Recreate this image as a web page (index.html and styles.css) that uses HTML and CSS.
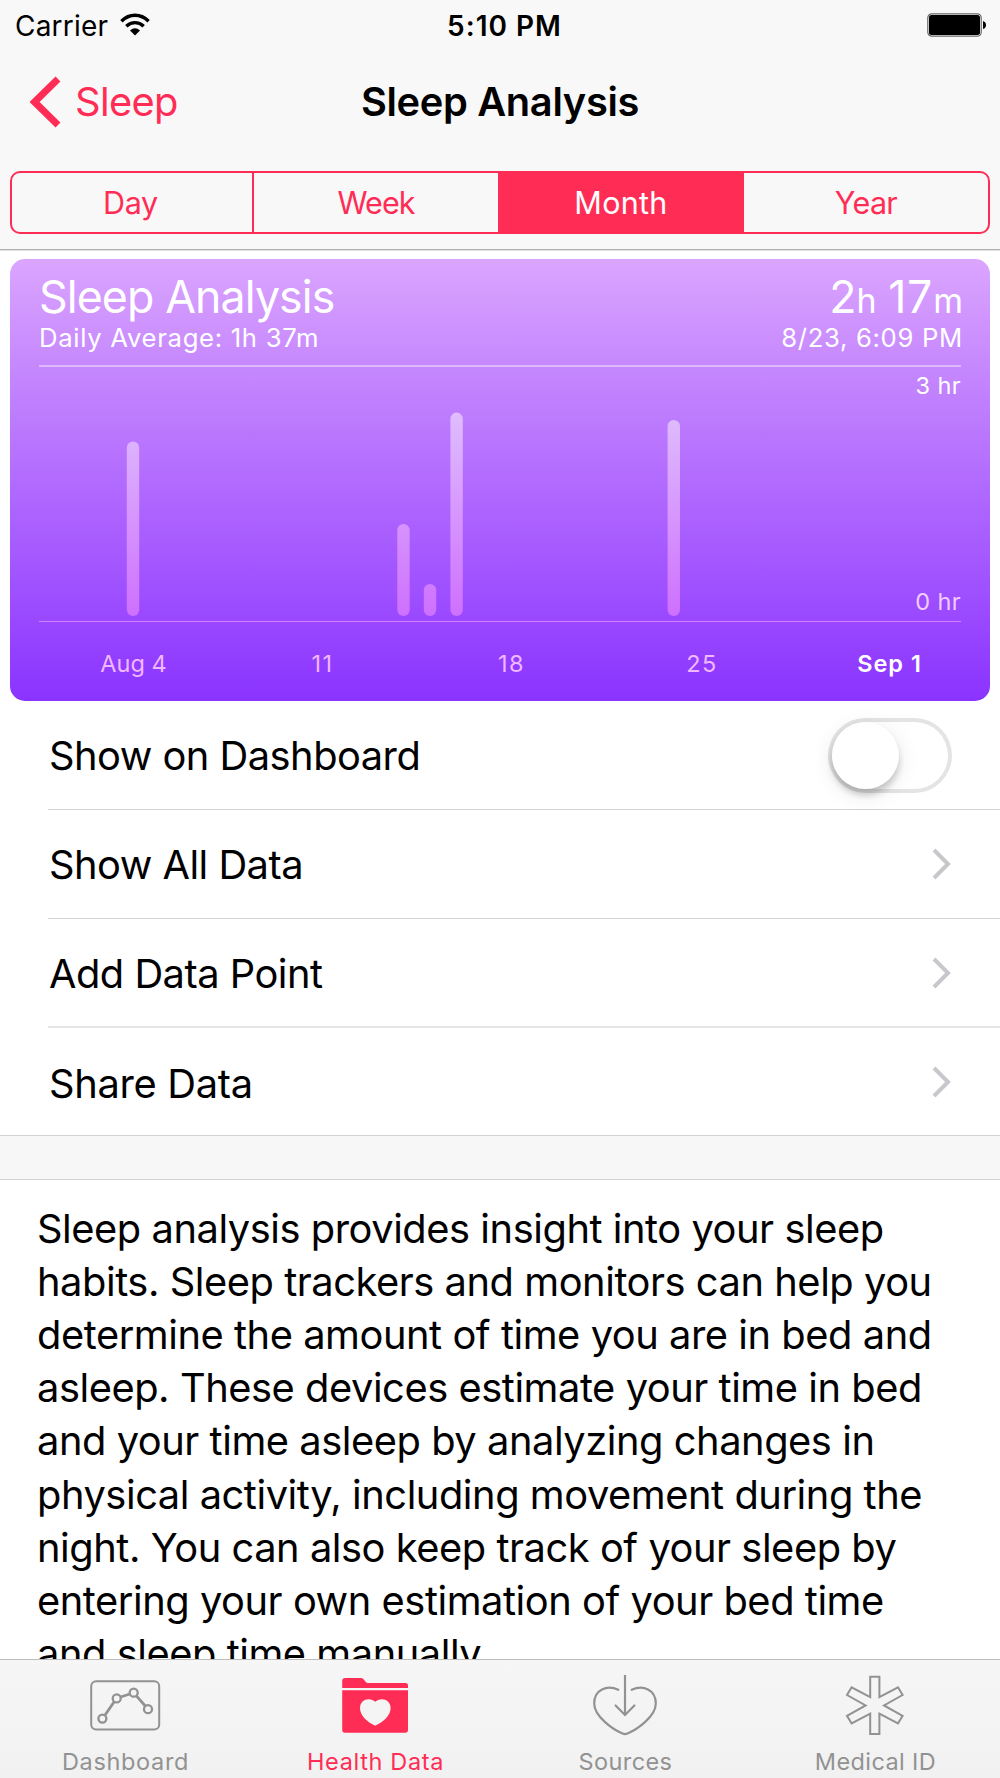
FILE: index.html
```html
<!DOCTYPE html>
<html lang="en">
<head>
<meta charset="utf-8">
<title>Sleep Analysis</title>
<link rel="stylesheet" href="styles.css">
</head>
<body>
<div class="screen">
  <header class="header">
    <div class="status">
      <div class="status-left">
        <span class="carrier">Carrier</span>
        <svg class="wifi" width="32" height="24" viewBox="0 0 32 24">
          <g fill="none" stroke="#000" stroke-width="3.4">
            <path d="M2.4 8.2Q8.4 2.2 16 2.2T29.6 8.2"/>
            <path d="M7.3 13.3Q11.2 9.6 16 9.6T24.7 13.3"/>
          </g>
          <path d="M11 17.4Q16 13 21 17.4L16 22.6Z"/>
        </svg>
      </div>
      <span class="time">5:10 PM</span>
      <div class="status-right">
        <svg width="60" height="24" viewBox="0 0 60 24">
          <rect x=".8" y=".8" width="53.4" height="22.4" rx="4" fill="#fff" stroke="#666" stroke-width="1.2"/>
          <rect x="2" y="2" width="51" height="20" rx="2.5"/>
          <path d="M56 8Q59 9 59 12T56 16Z"/>
        </svg>
      </div>
    </div>
    <nav class="nav">
      <a class="back">
        <svg width="32" height="52" viewBox="0 0 32 52"><path d="M28 3L4.6 26L28 49" fill="none" stroke="#ff2d55" stroke-width="7"/></svg>
        <span>Sleep</span>
      </a>
      <h1 class="title">Sleep Analysis</h1>
      <span></span>
    </nav>
    <div class="segments">
      <span class="segment day">Day</span>
      <span class="segment week">Week</span>
      <span class="segment selected">Month</span>
      <span class="segment year">Year</span>
    </div>
  </header>

  <main class="content">
    <section class="card">
      <div class="card-head">
        <div>
          <h2 class="card-title">Sleep Analysis</h2>
          <p class="card-sub">Daily Average: 1h 37m</p>
        </div>
        <div class="card-right">
          <p class="value">2<small>h</small><span class="minutes">17</span><small>m</small></p>
          <p class="card-sub">8/23, 6:09 PM</p>
        </div>
      </div>
      <div class="plot">
        <svg class="bars" width="922" height="254" viewBox="0 0 922 254">
          <defs>
            <linearGradient id="bar" gradientUnits="userSpaceOnUse" x1="0" y1="46" x2="0" y2="249">
              <stop offset="0" stop-color="#dfbdfe"/>
              <stop offset="1" stop-color="#ce70ff"/>
            </linearGradient>
          </defs>
          <g fill="url(#bar)">
            <rect x="87.8" y="74.5" width="12.4" height="174.5" rx="6.2"/>
            <rect x="358.3" y="157" width="12.4" height="92" rx="6.2"/>
            <rect x="384.8" y="217" width="12.4" height="32" rx="6.2"/>
            <rect x="411.4" y="45.6" width="12.4" height="203.4" rx="6.2"/>
            <rect x="628.6" y="53" width="12.4" height="196" rx="6.2"/>
          </g>
        </svg>
        <div class="scale"><span>3 hr</span><span class="zero">0 hr</span></div>
      </div>
      <div class="dates">
        <span>Aug 4</span><span class="num">11</span><span class="num">18</span><span class="num late">25</span><span class="current">Sep 1</span>
      </div>
    </section>

    <section class="rows">
      <div class="row"><span>Show on Dashboard</span><span class="switch"><span class="knob"></span></span></div>
      <div class="row"><span>Show All Data</span><svg class="chevron" width="20" height="32" viewBox="0 0 20 32"><path d="M2 2L16 16L2 30"/></svg></div>
      <div class="row soft"><span class="add">Add Data Point</span><svg class="chevron" width="20" height="32" viewBox="0 0 20 32"><path d="M2 2L16 16L2 30"/></svg></div>
      <div class="row last"><span class="share">Share Data</span><svg class="chevron" width="20" height="32" viewBox="0 0 20 32"><path d="M2 2L16 16L2 30"/></svg></div>
    </section>
    <div class="gap"></div>
    <p class="about">Sleep analysis provides insight into your sleep<br>habits. Sleep trackers and monitors can help you<br>determine the amount of time you are in bed and<br>asleep. These devices estimate your time in bed<br>and your time asleep by analyzing changes in<br>physical activity, including movement during the<br>night. You can also keep track of your sleep by<br>entering your own estimation of your bed time<br>and sleep time manually.</p>
  </main>

  <footer class="tabs">
    <a class="tab">
      <svg width="90" height="70" viewBox="0 0 90 70" fill="none" stroke="#929292" stroke-width="2">
        <rect x="11.2" y="13.2" width="68" height="48.4" rx="5"/>
        <path d="M24.9 47.3L34.2 33.8M40.6 29L49.8 26M56.4 27.8L65.3 38" stroke-width="2.8"/>
        <g stroke-width="2.3"><circle cx="22.4" cy="50.6" r="4"/><circle cx="36.7" cy="30.4" r="4"/><circle cx="53.7" cy="24.7" r="4"/><circle cx="68" cy="41.2" r="4"/></g>
      </svg>
      <span>Dashboard</span>
    </a>
    <a class="tab active">
      <svg width="90" height="70" viewBox="0 0 90 70" fill="#ff2d55">
        <path d="M12.2 20V13Q12.2 10 15.2 10H31Q33 10 34.2 12L36 14.3Q36.6 15 38 15H75.5Q78 15 78 17.5V20Z"/>
        <path fill-rule="evenodd" d="M12.2 22.3H78V62Q78 64.7 75.3 64.7H15Q12.2 64.7 12.2 62ZM45.2 33.8C40.5 29 30 30.5 30 40.3C30 48 38 54.5 45.2 57.7C52.5 54.5 60.6 48 60.6 40.3C60.6 30.5 50 29 45.2 33.8Z"/>
      </svg>
      <span>Health Data</span>
    </a>
    <a class="tab sources">
      <svg width="90" height="70" viewBox="0 0 90 70" fill="none" stroke="#929292" stroke-width="2.2">
        <path d="M45 7V46.5"/>
        <path d="M35.6 37.5L45 47L54.4 37.5" stroke-linecap="round"/>
        <path d="M38.3 21.8C27 16.6 14.2 21.5 14.2 35.5C14.2 48.5 33 61.5 42.5 65.5Q45 66.7 47.5 65.5C57 61.5 75.8 48.5 75.8 35.5C75.8 21.5 63 16.6 51.7 21.8" stroke-linecap="round"/>
      </svg>
      <span>Sources</span>
    </a>
    <a class="tab sources">
      <svg width="90" height="70" viewBox="0 0 90 70" fill="none" stroke="#929292" stroke-width="2">
        <path d="M40.2 8.8H49.4V29.2L68 19.3L72.6 27L54 37.4L72.6 47.8L68 55.5L49.4 45.6V66H40.2V45.6L21.6 55.5L17 47.8L35.6 37.4L17 27L21.6 19.3L40.2 29.2Z"/>
      </svg>
      <span>Medical ID</span>
    </a>
  </footer>
</div>
</body>
</html>
```
FILE: styles.css
```css
* { box-sizing: border-box; }
body { margin: 0; background: #fff; color: #000; font-family: Inter, "Liberation Sans", sans-serif; }
h1, h2, p { margin: 0; font-weight: 400; }
svg { display: block; flex: none; }

.screen { display: flex; flex-direction: column; width: 1000px; height: 1778px; overflow: hidden; }

.header { flex: none; height: 251px; background: #f8f8f8; border-bottom: 1px solid #e0e0e0; box-shadow: inset 0 -1px #b2b2b2; }
.status { display: grid; grid-template-columns: 1fr auto 1fr; align-items: center; height: 50px; padding: 0 13px 0 15px; font-size: 28px; }
.status-left { display: flex; align-items: center; gap: 11px; }
.carrier { letter-spacing: .2px; padding-top: 1px; }
.wifi { margin-top: -1px; }
.time { font-weight: 600; letter-spacing: 1px; margin-left: 7px; padding-top: 1px; }
.status-right { display: flex; justify-content: flex-end; }

.nav { display: grid; grid-template-columns: 1fr auto 1fr; align-items: center; height: 103px; padding: 0 30px; font-size: 39.8px; }
.back { display: flex; align-items: center; gap: 13px; color: #ff2d55; letter-spacing: -.64px; }
.title { font-size: 39.8px; font-weight: 600; letter-spacing: -.33px; }

.segments { display: grid; grid-template-columns: 240px 246px 244px 1fr; height: 63px; margin: 18px 10px 0; border: 2px solid #ff2d55; border-radius: 10px; color: #ff2d55; font-size: 30.5px; line-height: 60px; text-align: center; }
.segment + .segment { border-left: 2px solid #ff2d55; }
.segment.day { letter-spacing: -.35px; padding-right: 3px; }
.week { letter-spacing: -1px; }
.year { letter-spacing: -.7px; }
.selected { background: #ff2d55; color: #fff; letter-spacing: .3px; }

.content { flex: 1; min-height: 0; overflow: hidden; }
.card { height: 442px; margin: 8px 10px 0; padding: 0 29px; border-radius: 15px; color: #fff; background: linear-gradient(#dba5ff, #c587fd 25%, #9f50ff 75%, #8a33ff); }
.card-head { display: flex; justify-content: space-between; height: 108px; padding-top: 11px; border-bottom: 2px solid #deb8ff; }
.card-title { font-size: 44.7px; line-height: 54px; letter-spacing: -.9px; }
.card-sub { font-size: 25.7px; line-height: 27px; letter-spacing: .68px; }
.card-right { text-align: right; margin-right: -2px; }
.value { font-size: 44.7px; line-height: 54px; }
.value small { font-size: 34px; line-height: 0; }
.minutes { margin-left: 11.5px; letter-spacing: .8px; }
.plot { display: grid; height: 255px; border-bottom: 1px solid #d680ff; }
.bars, .scale { grid-area: 1 / 1; }
.scale { display: flex; flex-direction: column; justify-content: space-between; padding-bottom: 1px; font-size: 23.5px; line-height: 37px; letter-spacing: .4px; text-align: right; }
.zero { color: #f3ccff; }
.dates { display: grid; grid-template-columns: repeat(5, 189px); padding-top: 23px; font-size: 23.5px; line-height: 37px; text-align: center; color: #f0b8ff; }
.num { letter-spacing: 1.5px; }
.late { padding-left: 3px; }
.current { color: #fff; font-weight: 600; letter-spacing: 1px; }

.row { display: flex; align-items: center; justify-content: space-between; height: 109px; margin-left: 48px; padding-right: 48px; border-bottom: 1px solid #d3d3d5; font-size: 39.8px; letter-spacing: -.5px; }
.row > span:first-child { padding-left: 1px; }
.add { padding-top: 2px; }
.soft { border-bottom: 2px solid #e5e5e6; }
.last { height: 108px; margin-left: 0; padding-left: 48px; }
.share { letter-spacing: -.3px; padding-top: 4px; }
.chevron { fill: none; stroke: #c7c7cc; stroke-width: 4; }
.switch { width: 124px; height: 75px; padding: 4px; border-radius: 38px; background: #fff; box-shadow: inset 0 0 0 4px #e4e4e4; }
.knob { display: block; width: 67px; height: 67px; border-radius: 50%; background: #fff; box-shadow: 0 6px 6px rgba(0,0,0,.18), 0 5px 22px rgba(0,0,0,.1); }

.gap { height: 44px; background: #f7f7f7; border-bottom: 1px solid #d3d3d5; }
.about { padding: 21.8px 0 0 37px; font-size: 39.8px; line-height: 53.14px; letter-spacing: -.44px; white-space: nowrap; }

.tabs { flex: none; display: grid; grid-template-columns: repeat(4, 1fr); height: 119px; border-top: 1px solid #bcbcbc; background: linear-gradient(#f6f6f6, #f1f1f1); }
.tab { display: flex; flex-direction: column; align-items: center; padding-top: 8px; color: #929292; font-size: 23.5px; line-height: 48px; letter-spacing: .65px; }
.tab span { padding-left: 1px; }
.active { color: #ff2d55; }
.sources { letter-spacing: .39px; }
```
